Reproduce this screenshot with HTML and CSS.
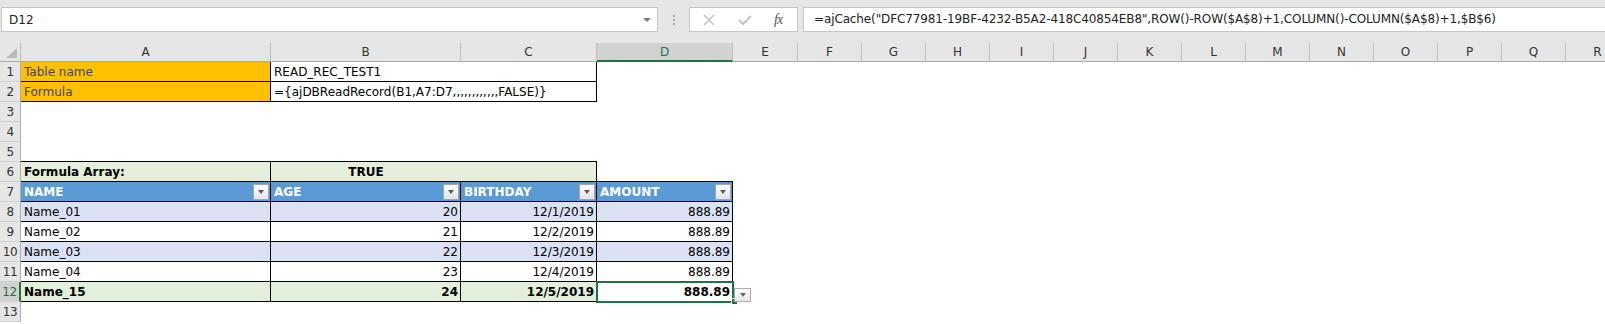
FILE: index.html
```html
<!DOCTYPE html>
<html lang="en">
  <head>
    <meta charset="UTF-8" />
    <title>READ_REC_TEST1 - Excel</title>
    <link rel="stylesheet" href="styles.css">
  </head>
  <body>
    <div class="toolbar">
      <div class="name-box">
        <span>D12</span>
        <span class="caret"></span>
      </div>
      <div class="grip"><i></i><i></i><i></i></div>
      <div class="fx-box">
        <svg class="icon" width="14" height="12" viewBox="0 0 14 12">
          <path d="M2 1 L12 11 M12 1 L2 11" stroke="#bdbdbd" stroke-width="1.4" fill="none" />
        </svg>
        <svg class="icon" width="14" height="12" viewBox="0 0 14 12">
          <path d="M1 6 L5 10 L13 2" stroke="#c4c4c4" stroke-width="2" fill="none" />
        </svg>
        <span class="fx">fx</span>
      </div>
      <div class="formula">=ajCache("DFC77981-19BF-4232-B5A2-418C40854EB8",ROW()-ROW($A$8)+1,COLUMN()-COLUMN($A$8)+1,$B$6)</div>
    </div>

    <div class="sheet">
      <div class="row col-heads">
        <div class="corner">
          <svg width="21" height="19" viewBox="0 0 21 19">
            <path d="M17 5 L17 15 L6 15 Z" fill="#b9b9b9" />
          </svg>
        </div>
        <div class="ch w-a">A</div>
        <div class="ch w-b">B</div>
        <div class="ch w-c">C</div>
        <div class="ch w-d active">D</div>
        <div class="ch w-e">E</div>
        <div class="ch w-x">F</div>
        <div class="ch w-x">G</div>
        <div class="ch w-x">H</div>
        <div class="ch w-x">I</div>
        <div class="ch w-x">J</div>
        <div class="ch w-x">K</div>
        <div class="ch w-x">L</div>
        <div class="ch w-x">M</div>
        <div class="ch w-x">N</div>
        <div class="ch w-x">O</div>
        <div class="ch w-x">P</div>
        <div class="ch w-x">Q</div>
        <div class="ch w-x">R</div>
      </div>

      <div class="row">
        <div class="rh">1</div>
        <div class="cell w-a bd input">Table name</div>
        <div class="cell w-b bb">READ_REC_TEST1</div>
        <div class="cell w-c bd"></div>
      </div>
      <div class="row">
        <div class="rh">2</div>
        <div class="cell w-a bd input">Formula</div>
        <div class="cell w-b bb">={ajDBReadRecord(B1,A7:D7,,,,,,,,,,,,FALSE)}</div>
        <div class="cell w-c bd"></div>
      </div>
      <div class="row">
        <div class="rh">3</div>
      </div>
      <div class="row">
        <div class="rh">4</div>
      </div>
      <div class="row">
        <div class="rh">5</div>
        <div class="cell w-abc bb"></div>
      </div>

      <div class="row">
        <div class="rh">6</div>
        <div class="cell w-a bd green bold">Formula Array:</div>
        <div class="cell w-b bb green bold center">TRUE</div>
        <div class="cell w-c bd green"></div>
        <div class="cell w-d bb"></div>
      </div>
      <div class="row">
        <div class="rh">7</div>
        <div class="cell w-a bd head">NAME<span class="filter"></span></div>
        <div class="cell w-b bd head">AGE<span class="filter"></span></div>
        <div class="cell w-c bd head">BIRTHDAY<span class="filter"></span></div>
        <div class="cell w-d bd head">AMOUNT<span class="filter"></span></div>
      </div>
      <div class="row">
        <div class="rh">8</div>
        <div class="cell w-a bd band">Name_01</div>
        <div class="cell w-b bd band num">20</div>
        <div class="cell w-c bd band num">12/1/2019</div>
        <div class="cell w-d bd band num">888.89</div>
      </div>
      <div class="row">
        <div class="rh">9</div>
        <div class="cell w-a bd">Name_02</div>
        <div class="cell w-b bd num">21</div>
        <div class="cell w-c bd num">12/2/2019</div>
        <div class="cell w-d bd num">888.89</div>
      </div>
      <div class="row">
        <div class="rh">10</div>
        <div class="cell w-a bd band">Name_03</div>
        <div class="cell w-b bd band num">22</div>
        <div class="cell w-c bd band num">12/3/2019</div>
        <div class="cell w-d bd band num">888.89</div>
      </div>
      <div class="row">
        <div class="rh">11</div>
        <div class="cell w-a bd">Name_04</div>
        <div class="cell w-b bd num">23</div>
        <div class="cell w-c bd num">12/4/2019</div>
        <div class="cell w-d bd num">888.89</div>
      </div>
      <div class="row">
        <div class="rh active">12</div>
        <div class="cell w-a bd green bold">Name_15</div>
        <div class="cell w-b bd green bold num">24</div>
        <div class="cell w-c bd green bold num">12/5/2019</div>
        <div class="cell w-d bd bold num selected">
          888.89
          <span class="handle"></span>
          <span class="total-drop"></span>
        </div>
      </div>
      <div class="row">
        <div class="rh">13</div>
      </div>
    </div>
  </body>
</html>
```

FILE: styles.css
```css
body {
  margin: 0;
  font-family: "DejaVu Sans", sans-serif;
  font-size: 12px;
  color: #000;
  background-color: #fff;
  overflow: hidden;
}

/* formula bar */
.toolbar {
  display: flex;
  height: 43px;
  padding: 7px 0 11px 1px;
  box-sizing: border-box;
  background-color: #e6e6e6;
}

.name-box {
  width: 657px;
  box-sizing: border-box;
  border: 1px solid #c6c6c6;
  background-color: #fff;
  display: flex;
  align-items: center;
  justify-content: space-between;
  padding: 0 6px 0 7px;
  color: #222;
}

.caret {
  width: 0;
  height: 0;
  border-left: 4px solid transparent;
  border-right: 4px solid transparent;
  border-top: 4px solid #808080;
}

.grip {
  width: 31px;
  display: flex;
  flex-direction: column;
  align-items: center;
  justify-content: center;
  gap: 2px;
}

.grip i {
  width: 2px;
  height: 2px;
  background-color: #a6a6a6;
}

.fx-box {
  width: 109px;
  box-sizing: border-box;
  border: 1px solid #c6c6c6;
  background-color: #fff;
  display: flex;
  align-items: center;
  gap: 22px;
  padding-left: 12px;
}

.fx {
  width: 14px;
  font-family: "Liberation Serif", serif;
  font-style: italic;
  font-size: 14px;
  color: #555;
  letter-spacing: -1px;
}

.formula {
  flex: 1;
  margin-left: 5px;
  border: 1px solid #c6c6c6;
  border-right: none;
  background-color: #fff;
  padding-left: 10px;
  line-height: 23px;
  white-space: nowrap;
  overflow: hidden;
  color: #222;
  letter-spacing: -0.12px;
}

/* grid */
.row {
  display: flex;
  height: 20px;
}

.col-heads {
  height: 19px;
}

.corner {
  width: 21px;
  flex: none;
  box-sizing: border-box;
  background-color: #e6e6e6;
  border-right: 1px solid #bdbdbd;
  border-bottom: 1px solid #ababab;
}

.corner svg {
  display: block;
}

.ch {
  flex: none;
  box-sizing: border-box;
  background-color: #e6e6e6;
  border-right: 1px solid #bdbdbd;
  border-bottom: 1px solid #ababab;
  text-align: center;
  line-height: 18px;
  color: #333;
}

.ch.active {
  background-color: #d2d2d2;
  color: #217346;
  border-bottom: 2px solid #217346;
}

.rh {
  width: 21px;
  flex: none;
  box-sizing: border-box;
  background-color: #e6e6e6;
  border-right: 1px solid #ababab;
  border-bottom: 1px solid #d0d0d0;
  text-align: center;
  line-height: 20px;
  color: #333;
  letter-spacing: -0.5px;
}

.rh.active {
  background-color: #d2d2d2;
  color: #217346;
  border-right: 2px solid #217346;
}

.w-a { width: 250px; }
.w-b { width: 190px; }
.w-c { width: 136px; }
.w-d { width: 136px; }
.w-e { width: 65px; }
.w-x { width: 64px; }
.w-abc { width: 576px; }

.cell {
  flex: none;
  box-sizing: border-box;
  height: 20px;
  padding: 0 3px;
  line-height: 20px;
  white-space: nowrap;
}

.bd {
  border-right: 1px solid #000;
  border-bottom: 1px solid #000;
}

.bb {
  border-bottom: 1px solid #000;
}

.input {
  background-color: #ffc000;
  color: #3f3f76;
}

.green {
  background-color: #e2efda;
}

.band {
  background-color: #d9e1f2;
}

.bold {
  font-weight: bold;
}

.center {
  text-align: center;
}

.num {
  text-align: right;
  padding-right: 2px;
}

.head {
  background-color: #5b9bd5;
  color: #fff;
  font-weight: bold;
  display: flex;
  justify-content: space-between;
  padding-right: 1px;
}

.filter {
  width: 16px;
  height: 16px;
  margin-top: 2px;
  box-sizing: border-box;
  border: 1px solid #a6a6a6;
  background: linear-gradient(#ffffff, #e4e4e6);
  display: flex;
  align-items: center;
  justify-content: center;
}

.filter::after {
  content: "";
  border-left: 3.5px solid transparent;
  border-right: 3.5px solid transparent;
  border-top: 4px solid #5a5a5a;
}

.selected {
  position: relative;
  background-color: #fff;
  outline: 2px solid #217346;
  outline-offset: -1px;
}

.handle {
  position: absolute;
  left: 134px;
  top: 16px;
  width: 6px;
  height: 6px;
  box-sizing: border-box;
  background-color: #217346;
  border-left: 1px solid #fff;
  border-top: 1px solid #fff;
}

.total-drop {
  position: absolute;
  left: 137px;
  top: 6px;
  width: 17px;
  height: 14px;
  box-sizing: border-box;
  border: 1px solid #ababab;
  background: linear-gradient(#ffffff, #e6e6e8);
  display: flex;
  align-items: center;
  justify-content: center;
}

.total-drop::after {
  content: "";
  border-left: 3.5px solid transparent;
  border-right: 3.5px solid transparent;
  border-top: 4px solid #6a6a6a;
}
```
